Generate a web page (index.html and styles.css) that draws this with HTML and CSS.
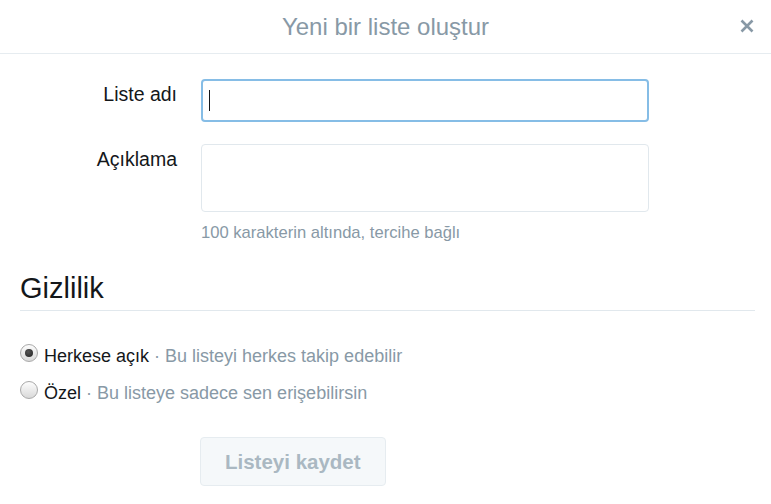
FILE: index.html
```html
<!DOCTYPE html>
<html lang="tr">
<head>
<meta charset="utf-8">
<title>Yeni bir liste oluştur</title>
<link rel="stylesheet" href="styles.css">
</head>
<body>
<div class="modal">
  <header class="modal-header">
    <h1 class="modal-title">Yeni bir liste oluştur</h1>
    <button class="close" aria-label="Kapat">
      <svg width="14" height="14" viewBox="0 0 14 14"><path d="M1.5 1.5 L12.5 12.5 M12.5 1.5 L1.5 12.5" stroke="#8899a6" stroke-width="2.6" stroke-linecap="butt"/></svg>
    </button>
  </header>
  <form class="form">
    <div class="field-grid">
      <label class="label" for="name">Liste adı</label>
      <div class="control">
        <div class="text-input focused"><span class="caret"></span></div>
      </div>
      <label class="label" for="desc">Açıklama</label>
      <div class="control">
        <div class="textarea"></div>
        <p class="help">100 karakterin altında, tercihe bağlı</p>
      </div>
    </div>
    <h2 class="section-title">Gizlilik</h2>
    <div class="options">
      <label class="option"><span class="radio checked"></span><span class="opt-name">Herkese açık</span><span class="opt-desc">&nbsp;· Bu listeyi herkes takip edebilir</span></label>
      <label class="option"><span class="radio"></span><span class="opt-name">Özel</span><span class="opt-desc">&nbsp;· Bu listeye sadece sen erişebilirsin</span></label>
    </div>
    <div class="actions">
      <button type="button" class="save" disabled>Listeyi kaydet</button>
    </div>
  </form>
</div>
</body>
</html>
```

FILE: styles.css
```css
html, body {
  margin: 0;
  padding: 0;
  background: #fff;
}
body {
  font-family: "Liberation Sans", Arial, sans-serif;
  color: #14171a;
}
.modal {
  width: 771px;
}
.modal-header {
  position: relative;
  height: 53px;
  border-bottom: 1px solid #e6ecf0;
  display: flex;
  align-items: center;
  justify-content: center;
}
.modal-title {
  margin: 0;
  font-size: 24px;
  font-weight: normal;
  color: #8899a6;
  line-height: 28px;
}
.close {
  position: absolute;
  right: 17px;
  top: 19px;
  width: 14px;
  height: 14px;
  padding: 0;
  border: 0;
  background: none;
  display: block;
}
.close svg { display: block; }

.form {
  padding-top: 25px;
}
.field-grid {
  display: grid;
  grid-template-columns: 177px 448px;
  column-gap: 24px;
  row-gap: 22px;
  align-items: start;
}
.label {
  text-align: right;
  font-size: 19.5px;
  line-height: 22px;
  padding-top: 4px;
  color: #14171a;
}
.text-input {
  box-sizing: border-box;
  height: 43px;
  border: 1px solid #e1e8ed;
  border-radius: 4px;
  display: flex;
  align-items: center;
  padding-left: 7px;
}
.text-input.focused {
  border: 2px solid #86bde6;
  padding-left: 6px;
}
.caret {
  width: 1px;
  height: 21px;
  background: #14171a;
}
.textarea {
  box-sizing: border-box;
  height: 68px;
  border: 1px solid #e1e8ed;
  border-radius: 4px;
}
.help {
  margin: 11px 0 0;
  font-size: 16.6px;
  line-height: 20px;
  color: #8899a6;
}
.section-title {
  margin: 28px 16px 0 20px;
  padding-bottom: 5px;
  font-size: 29px;
  line-height: 34px;
  font-weight: normal;
  color: #14171a;
  border-bottom: 1px solid #e1e8ed;
}
.options {
  margin-top: 34px;
  padding-left: 20px;
  display: flex;
  flex-direction: column;
  gap: 15px;
}
.option {
  display: flex;
  align-items: center;
  font-size: 18px;
  line-height: 22px;
}
.radio {
  box-sizing: border-box;
  width: 18px;
  height: 18px;
  border-radius: 50%;
  border: 1px solid #a9a9a9;
  background: linear-gradient(#fdfdfd, #d9d9d9);
  margin-right: 6px;
  position: relative;
  top: -3px;
  flex: none;
}
.radio.checked::after {
  content: "";
  position: absolute;
  left: 4px;
  top: 4px;
  width: 8px;
  height: 8px;
  border-radius: 50%;
  background: radial-gradient(circle at 40% 35%, #555, #222);
}
.opt-name { color: #14171a; }
.opt-desc { color: #8899a6; }

.actions {
  margin-top: 33px;
  padding-left: 200px;
}
.save {
  box-sizing: border-box;
  height: 49px;
  padding: 0 24px;
  font-family: "Liberation Sans", Arial, sans-serif;
  font-size: 20.5px;
  font-weight: bold;
  color: #aab8c2;
  background: #f5f8fa;
  border: 1px solid #e6ecf0;
  border-radius: 4px;
}
```
